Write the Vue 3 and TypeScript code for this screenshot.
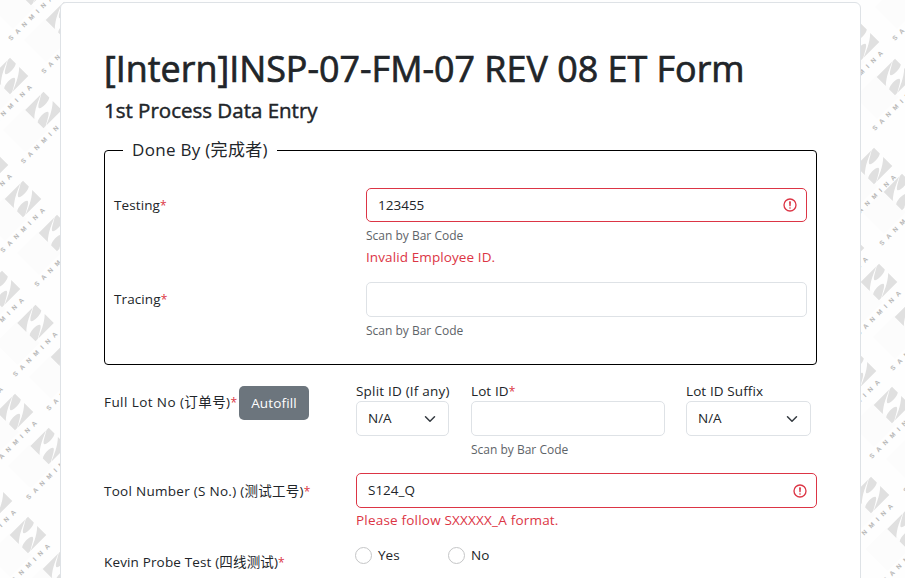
<script setup lang="ts">
import { ref } from 'vue'

interface Mark { x: number; y: number }

const marks: Mark[] = [
  { x: 31, y: -13 }, { x: 64, y: 20 }, { x: 10, y: 76 }, { x: 43.5, y: 110 },
  { x: -10, y: 165 }, { x: 23, y: 199 }, { x: 57, y: 233 }, { x: 2, y: 289 },
  { x: 35.5, y: 323 }, { x: 69, y: 357 }, { x: -19, y: 378 }, { x: 15, y: 412 }, { x: 48.7, y: 446 },
  { x: -6, y: 501 }, { x: 28, y: 535 }, { x: 61, y: 569 },
  { x: 861, y: 42 }, { x: 895, y: 77 }, { x: 915, y: -13 },
  { x: 874, y: 166 }, { x: 846, y: 248 }, { x: 902, y: 192 }, { x: 879, y: 282 },
  { x: 913, y: 317 }, { x: 858, y: 371 }, { x: 892, y: 405 }, { x: 926, y: 439 },
  { x: 871, y: 495 }, { x: 905.5, y: 529 },
]

const testing = ref('123455')
const tracing = ref('')
const splitId = ref('N/A')
const lotId = ref('')
const suffix = ref('N/A')
const tool = ref('S124_Q')
const probe = ref('')
</script>

<template>
  <div class="page">
    <svg class="pattern" width="905" height="578" aria-hidden="true">
      <g v-for="(m, i) in marks" :key="i" :transform="`translate(${m.x} ${m.y})`">
        <path d="M-18 -2 L4 20 L-18 42 L-40 20 Z" fill="#fcfcfc" />
        <g v-for="turn in [0, 180]" :key="turn" :transform="`rotate(${turn})`" fill="#e0e0e0">
          <path d="M-18.3 0 L-2.8 -15.5 C-5 -9 -9 -1 -9.2 9.1 Z" />
          <path d="M-2.2 -16.1 L0 -18.3 L5.8 -12.5 C5.5 -8.5 -1 -1.6 -4.3 -1.8 C-6.5 -2.5 -4 -9 -2.2 -16.1 Z" />
        </g>
        <text class="brand" x="0" y="0" textLength="60" transform="translate(-20 54) rotate(-45)">SANMINA</text>
      </g>
    </svg>
    <main class="card">
      <h1>[Intern]INSP-07-FM-07 REV 08 ET Form</h1>
      <h2>1st Process Data Entry</h2>
      <fieldset>
        <legend>Done By (完成者)</legend>
        <div class="row first">
          <label class="name">Testing<i>*</i></label>
          <div class="field">
            <div class="control invalid">
              <input v-model="testing" type="text">
              <svg class="alert" viewBox="0 0 12 12" fill="none" stroke="#dc3545"><circle cx="6" cy="6" r="4.5" /><path stroke-linejoin="round" d="M5.8 3.6h.4L6 6.5z" /><circle cx="6" cy="8.2" r=".6" fill="#dc3545" stroke="none" /></svg>
            </div>
            <small>Scan by Bar Code</small>
            <p class="error">Invalid Employee ID.</p>
          </div>
        </div>
        <div class="row second">
          <label class="name">Tracing<i>*</i></label>
          <div class="field">
            <div class="control tall"><input v-model="tracing" type="text"></div>
            <small>Scan by Bar Code</small>
          </div>
        </div>
      </fieldset>
      <section class="lot">
        <div class="lotname"><label class="wide">Full Lot No (订单号)<i>*</i></label><button type="button">Autofill</button></div>
        <div class="col split">
          <label>Split ID (If any)</label>
          <div class="control tall">
            <span class="value">{{ splitId }}</span>
            <svg class="chevron" viewBox="0 0 16 16"><path d="m2 5 6 6 6-6" /></svg>
          </div>
        </div>
        <div class="col lotid">
          <label>Lot ID<i>*</i></label>
          <div class="control tall"><input v-model="lotId" type="text"></div>
          <small>Scan by Bar Code</small>
        </div>
        <div class="col suffix">
          <label>Lot ID Suffix</label>
          <div class="control tall">
            <span class="value">{{ suffix }}</span>
            <svg class="chevron" viewBox="0 0 16 16"><path d="m2 5 6 6 6-6" /></svg>
          </div>
        </div>
      </section>
      <section class="tool">
        <label class="label tn">Tool Number (S No.) (测试工号)<i>*</i></label>
        <div class="toolfield">
          <div class="control invalid tall">
            <input v-model="tool" type="text">
            <svg class="alert" viewBox="0 0 12 12" fill="none" stroke="#dc3545"><circle cx="6" cy="6" r="4.5" /><path stroke-linejoin="round" d="M5.8 3.6h.4L6 6.5z" /><circle cx="6" cy="8.2" r=".6" fill="#dc3545" stroke="none" /></svg>
          </div>
          <p class="error format">Please follow SXXXXX_A format.</p>
        </div>
      </section>
      <section class="probe">
        <label class="label kp">Kevin Probe Test (四线测试)<i>*</i></label>
        <label class="radio"><input v-model="probe" type="radio" value="Yes"><span>Yes</span></label>
        <label class="radio"><input v-model="probe" type="radio" value="No"><span>No</span></label>
      </section>
    </main>
  </div>
</template>

<style>
body { margin: 0; overflow: hidden; }
</style>
<style scoped>
* { box-sizing: border-box; }
.page { position: relative; width: 905px; height: 578px; overflow: hidden; padding: 2px 0 0 60px; background: #fefefe; color: #212529; font: 13.5px/21px "Open Sans", "Noto Sans CJK SC", sans-serif; }
.pattern { position: absolute; left: 0; top: 0; }
.brand { font: bold 6.5px "Liberation Sans", sans-serif; fill: #b8b8b8; }
.card { position: relative; width: 801px; height: 640px; padding: 42px 43px 0; background: #fff; border: 1px solid #dee2e6; border-radius: 6px; }
h1, h2, p { margin: 0; }
i { font-size: 12px; line-height: 1; color: #dc3545; font-style: normal; }
h1 { height: 48px; font-size: 35.9px; line-height: 47px; font-weight: 500; white-space: nowrap; -webkit-text-stroke: .7px #212529; }
h2 { height: 26px; margin-top: 4px; font-size: 20.5px; line-height: 26px; font-weight: 500; white-space: nowrap; -webkit-text-stroke: .45px #212529; }
fieldset { height: 226px; margin: 16px 0 0; padding: 0 9px; border: 1px solid #000; border-radius: 4px; min-width: 0; }
legend { height: 22px; margin-left: 9px; padding: 0 9px; font-size: 17px; letter-spacing: .3px; line-height: 21px; white-space: nowrap; }
.row { display: flex; }
.first { height: 94px; margin-top: 27px; }
.name { width: 252px; padding-top: 7px; letter-spacing: .1px; }
.field { flex: 1; }
.control { display: flex; align-items: center; width: 100%; height: 34px; padding: 0 8px 0 11px; background: #fff; border: 1px solid #dee2e6; border-radius: 5px; }
.tall { height: 35px; }
.invalid { border-color: #dc3545; }
input[type="text"] { flex: 1; width: 0; padding: 0; border: 0; outline: 0; background: transparent; color: inherit; font: inherit; }
.alert { width: 16px; height: 16px; flex: none; }
small { display: block; margin-top: 5px; font-size: 12px; line-height: 18px; color: #5e6368; }
.error { margin-top: 2px; line-height: 20px; letter-spacing: .1px; color: #dc3545; }
.lot { display: flex; height: 87px; margin-top: 16px; }
.lotname { display: flex; align-items: flex-start; width: 252px; padding-top: 5px; }
.wide { width: 132px; padding-top: 6px; white-space: nowrap; letter-spacing: .42px; }
button { width: 70px; height: 34px; margin-left: 3px; padding: 0; border: 0; border-radius: 5px; color: #fff; background: #6c757d; font: inherit; letter-spacing: .15px; }
.col label { display: block; height: 20px; line-height: 20px; white-space: nowrap; letter-spacing: .1px; }
.split { width: 93px; }
.split label { letter-spacing: .2px; }
.lotid { width: 194px; margin-left: 22px; }
.suffix { width: 125px; margin-left: 21px; }
.value { flex: 1; }
.chevron { width: 12px; height: 12px; margin-right: 4px; fill: none; stroke: #343a40; stroke-width: 2; stroke-linecap: round; stroke-linejoin: round; }
.tool { display: flex; height: 70px; margin-top: 5px; }
.label { width: 252px; white-space: nowrap; }
.tn { padding-top: 8px; letter-spacing: .28px; }
.toolfield { width: 461px; }
.format { margin-top: 2px; letter-spacing: .2px; }
.probe { display: flex; }
.kp { width: 250px; padding-top: 9px; letter-spacing: .15px; }
.radio { display: flex; width: 93px; height: 25px; align-items: center; }
.radio input { appearance: none; width: 17px; height: 17px; margin: 0 6px 0 1px; border: 1px solid #c5c6c7; border-radius: 50%; background: #fff; }
</style>
